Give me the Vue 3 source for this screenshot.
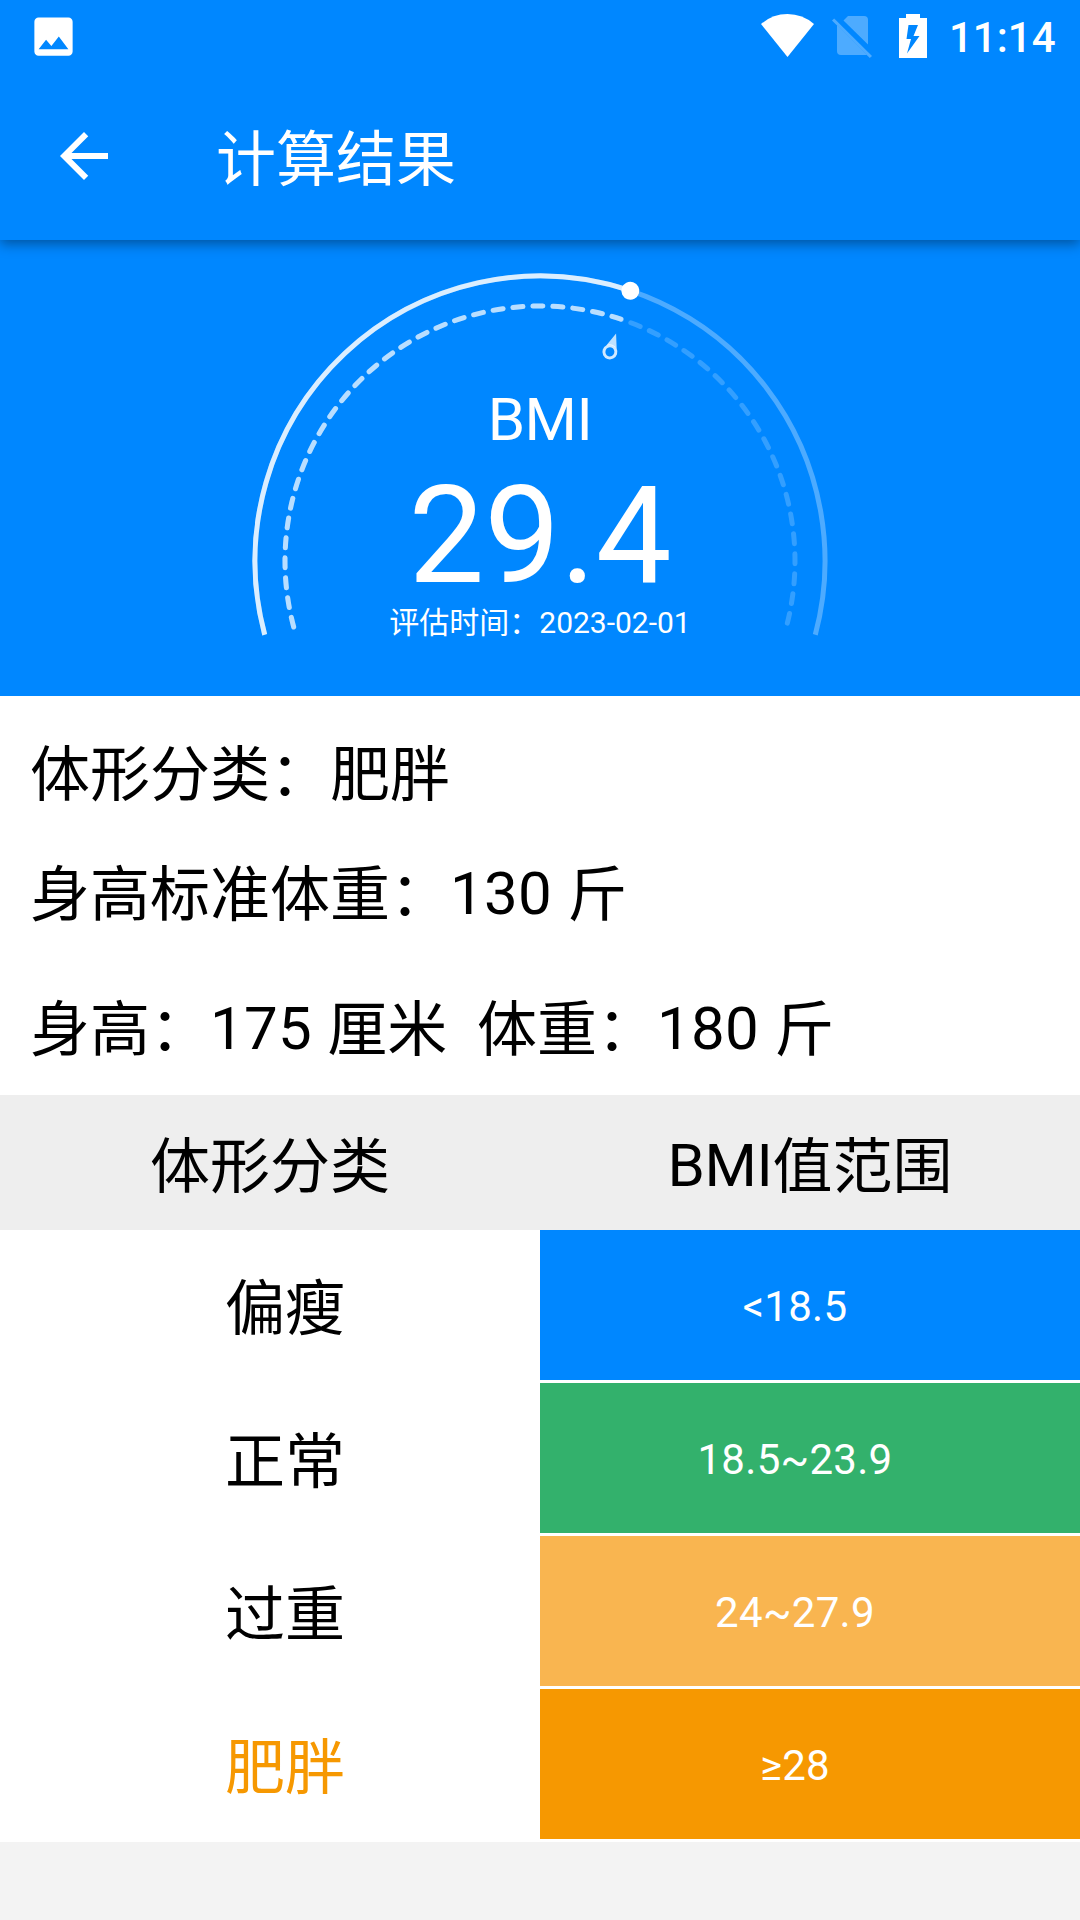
<script setup>
const bmi = 29.4
const maxBmi = 50
const sweep = 210
const center = { x: 540, y: 321 }
const progress = (bmi / maxBmi) * sweep
const needleAngle = progress - sweep / 2

function point(radius, degrees) {
  const rad = (degrees * Math.PI) / 180
  return [center.x + radius * Math.sin(rad), center.y - radius * Math.cos(rad)]
}

function arc(radius, length) {
  const from = point(radius, -sweep / 2)
  const to = point(radius, -sweep / 2 + length)
  return `M${from} A${radius} ${radius} 0 ${length > 180 ? 1 : 0} 1 ${to}`
}

const ranges = [
  { name: '偏瘦', range: '<18.5', tone: 'thin' },
  { name: '正常', range: '18.5~23.9', tone: 'normal' },
  { name: '过重', range: '24~27.9', tone: 'over' },
  { name: '肥胖', range: '≥28', tone: 'obese', current: true },
]
</script>

<template>
  <div class="screen">
    <header class="appbar">
      <div class="status">
        <svg class="photo" viewBox="0 0 24 24"><path d="M21 19V5c0-1.100-.9-2-2-2H5c-1.100 0-2 .9-2 2v14c0 1.100.9 2 2 2h14c1.100 0 2-.9 2-2zM8.500 13.500l2.500 3.010L14.500 12l4.500 6H5l3.500-4.500z" /></svg>
        <div class="status-right">
          <svg class="wifi" viewBox="0 0 53 43"><path d="M0 10Q11.500 0 26.500 0Q41.500 0 53 10L26.500 43Z" /></svg>
          <svg class="sim" viewBox="0 0 40 43">
            <path d="M16 2H32Q36 2 36 6V30.500L11.500 6.500Z" />
            <path d="M5 11L35 41Q34 41 32 41H9Q5 41 5 37Z" />
            <path d="M2.200 4.500L40 42L37.800 44L0 6.500Z" />
          </svg>
          <svg class="battery" viewBox="0 0 28 44"><path fill-rule="evenodd" d="M7 0H21V4H28V44H0V4H7ZM9.500 11L7.500 25H12L8 39.500L20.500 22H14.500L19 11Z" /></svg>
          <span class="clock">11:14</span>
        </div>
      </div>
      <div class="toolbar">
        <svg class="back" viewBox="0 0 24 24"><path d="M20 11H7.830l5.590-5.590L12 4l-8 8 8 8 1.410-1.410L7.830 13H20v-2z" /></svg>
        <h1>计算结果</h1>
      </div>
    </header>

    <section class="gauge">
      <svg class="dial" viewBox="0 0 1080 456">
        <g fill="none" stroke="#fff" stroke-width="5">
          <path :d="arc(285, sweep)" opacity=".3" />
          <path :d="arc(285, progress)" opacity=".8" />
          <g stroke-linecap="round" stroke-dasharray="10 10">
            <path :d="arc(255, sweep)" opacity=".2" />
            <path :d="arc(255, progress)" opacity=".66" />
          </g>
        </g>
        <g :transform="`rotate(${needleAngle} ${center.x} ${center.y})`" fill="#fff">
          <circle cx="540" cy="36" r="9" />
          <path d="M540 81L534.500 95.500Q540 92 545.500 95.500Z" opacity=".75" />
          <circle cx="540" cy="100.500" r="6" fill="none" stroke="#fff" stroke-width="3" opacity=".82" />
        </g>
      </svg>
      <div class="reading">
        <div class="label">BMI</div>
        <div class="value">{{ bmi }}</div>
        <div class="date">评估时间：2023-02-01</div>
      </div>
    </section>

    <section class="summary">
      <p>体形分类：肥胖</p>
      <p>身高标准体重：<span class="num">130 </span>斤</p>
      <p>身高：<span class="num">175 </span>厘米&nbsp; 体重：<span class="num">180 </span>斤</p>
    </section>

    <section class="table">
      <div class="head">
        <span class="cell">体形分类</span>
        <span class="cell"><span class="latin">BMI</span>值范围</span>
      </div>
      <div v-for="r in ranges" :key="r.name" class="row">
        <span class="name" :class="{ current: r.current }">{{ r.name }}</span>
        <span class="range" :class="r.tone">{{ r.range }}</span>
      </div>
    </section>
  </div>
</template>

<style>
body {
  margin: 0;
  background: #f3f3f3;
}
</style>

<style scoped>
.screen {
  width: 1080px;
  height: 1920px;
  overflow: hidden;
  background: #f3f3f3;
  color: #000;
  font-family: Roboto, "Noto Sans CJK SC", sans-serif;
  font-size: 60px;
}
svg {
  display: block;
  flex: none;
  fill: #fff;
}
.latin,
.num {
  line-height: 1;
  vertical-align: 2px;
}
.latin {
  letter-spacing: -0.3px;
}
.num {
  letter-spacing: 0.3px;
}
.appbar {
  position: relative;
  height: 240px;
  background: #0087ff;
  color: #fff;
  box-shadow: 0 4px 12px rgba(0, 0, 0, 0.38);
}
.status {
  display: flex;
  justify-content: space-between;
  height: 72px;
  box-sizing: border-box;
  padding: 0 24.500px 0 28.200px;
}
.photo {
  width: 51px;
  height: 51px;
  margin-top: 10.500px;
}
.status-right {
  display: flex;
  align-items: flex-start;
}
.wifi {
  width: 53px;
  height: 43px;
  margin-top: 14px;
}
.sim {
  width: 40px;
  height: 43px;
  margin: 14px 0 0 18px;
  opacity: 0.3;
  overflow: visible;
}
.battery {
  width: 28px;
  height: 44px;
  margin: 14px 0 0 27px;
}
.clock {
  margin: 2px 0 0 21.500px;
  font-size: 42px;
  font-weight: 500;
  line-height: 72px;
}
.toolbar {
  display: flex;
  height: 168px;
}
.back {
  width: 72px;
  height: 72px;
  margin: 48px 96px 0 48px;
}
h1 {
  margin: 5px 0 0;
  font-size: 60px;
  font-weight: 400;
  line-height: 168px;
}
.gauge {
  display: grid;
  height: 456px;
  background: #0087ff;
  color: #fff;
}
.dial,
.reading {
  grid-area: 1 / 1;
}
.dial {
  width: 1080px;
  height: 456px;
}
.reading {
  padding-top: 145px;
  text-align: center;
}
.label {
  line-height: 70px;
  letter-spacing: -0.5px;
}
.value {
  margin-top: 11px;
  font-size: 135px;
  line-height: 140px;
}
.date {
  margin-top: 2px;
  font-size: 30px;
  line-height: 30px;
}
.summary {
  height: 399px;
  box-sizing: border-box;
  padding: 20px 30px 0;
  background: #fff;
}
.summary p {
  margin: 0;
  line-height: 120px;
  white-space: nowrap;
}
.summary p:last-child {
  margin-top: 15px;
}
.table {
  background: #fff;
}
.head {
  display: flex;
  height: 135px;
  background: #eee;
}
.cell {
  flex: 1;
  text-align: center;
  line-height: 145px;
}
.row {
  display: flex;
  height: 150px;
  padding-bottom: 3px;
}
.name,
.range {
  flex: 1;
  box-sizing: border-box;
  height: 150px;
  text-align: center;
}
.name {
  padding-left: 30px;
  line-height: 159px;
}
.name.current {
  color: #f69801;
}
.range {
  padding-right: 30px;
  color: #fff;
  font-size: 42px;
  letter-spacing: 0.3px;
  line-height: 153px;
}
.thin {
  background: #0087ff;
}
.normal {
  background: #33b16c;
}
.over {
  background: #f9b550;
}
.obese {
  background: #f69801;
}
</style>
